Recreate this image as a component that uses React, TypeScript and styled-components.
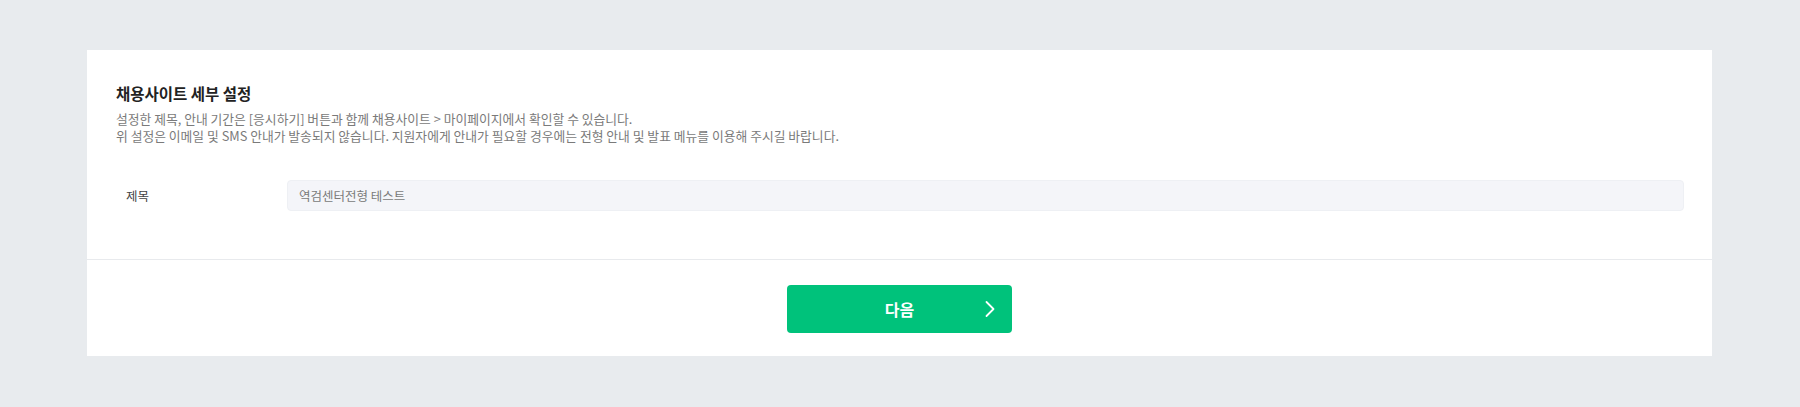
import styled, { createGlobalStyle } from "styled-components";

const GlobalStyle = createGlobalStyle`
  * { box-sizing: border-box; }
  body {
    margin: 0;
    background: #e8ebee;
    font-family: "Noto Sans CJK KR", "Noto Sans", sans-serif;
  }
`;

const Page = styled.div`
  padding: 50px 88px 50px 87px;
`;

const Card = styled.section`
  background: #fff;
`;

const Body = styled.div`
  padding: 32px 28px 48px 29px;
`;

const Title = styled.h2`
  margin: 0;
  font-size: 15.5px;
  line-height: 22px;
  font-weight: 700;
  color: #222;
`;

const Desc = styled.p`
  margin: 6px 0 0;
  font-size: 12.8px;
  line-height: 17px;
  color: #7a7a7a;
`;

const Row = styled.div`
  display: flex;
  align-items: center;
  margin-top: 36px;
  padding-left: 10px;
`;

const Label = styled.label`
  width: 161px;
  flex-shrink: 0;
  font-size: 12.5px;
  font-weight: 400;
  color: #444;
`;

const Input = styled.input`
  flex: 1;
  height: 31px;
  padding: 0 11px;
  border: 1px solid #eef0f4;
  border-radius: 4px;
  background: #f4f5f9;
  font-family: inherit;
  font-size: 12.5px;
  font-weight: 400;
  color: #7a7a7a;
  outline: none;
`;

const Footer = styled.div`
  display: flex;
  justify-content: center;
  border-top: 1px solid #e8eaed;
  padding: 25px 0 23px;
`;

const NextButton = styled.button`
  position: relative;
  width: 225px;
  height: 48px;
  border: none;
  border-radius: 4px;
  background: #00c27b;
  color: #fff;
  font-family: inherit;
  font-size: 16px;
  font-weight: 700;
  cursor: pointer;
  display: flex;
  align-items: center;
  justify-content: center;
`;

const Chevron = styled.svg`
  position: absolute;
  right: 17px;
  top: 50%;
  transform: translateY(-50%);
`;

export default function App() {
  return (
    <>
      <GlobalStyle />
      <Page>
        <Card>
          <Body>
            <Title>채용사이트 세부 설정</Title>
            <Desc>
              설정한 제목, 안내 기간은 [응시하기] 버튼과 함께 채용사이트 &gt; 마이페이지에서 확인할 수 있습니다.
              <br />
              위 설정은 이메일 및 SMS 안내가 발송되지 않습니다. 지원자에게 안내가 필요할 경우에는 전형 안내 및 발표 메뉴를 이용해 주시길 바랍니다.
            </Desc>
            <Row>
              <Label>제목</Label>
              <Input readOnly value="역검센터전형 테스트" />
            </Row>
          </Body>
          <Footer>
            <NextButton>
              다음
              <Chevron width="10" height="17" viewBox="0 0 10 17" fill="none">
                <path d="M1.5 1.5L8.5 8.5L1.5 15.5" stroke="#fff" strokeWidth="1.8" strokeLinecap="round" strokeLinejoin="round" />
              </Chevron>
            </NextButton>
          </Footer>
        </Card>
      </Page>
    </>
  );
}
